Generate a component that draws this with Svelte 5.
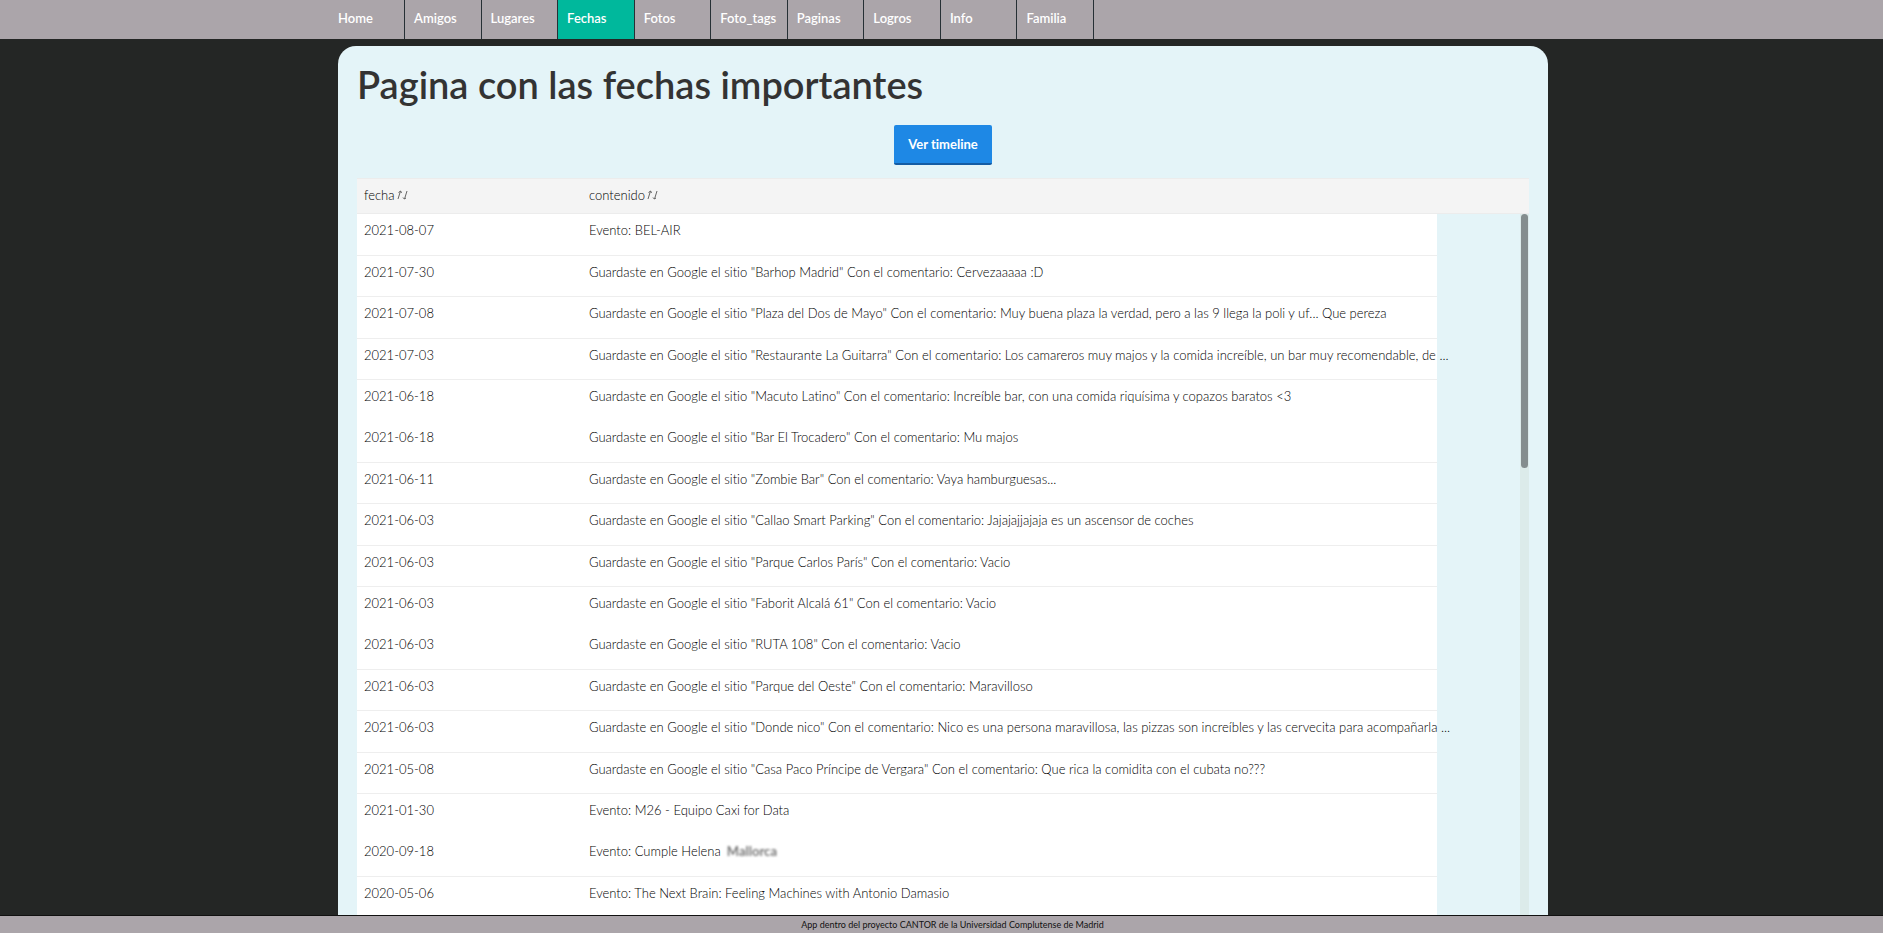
<script>
  const links = ['Home', 'Amigos', 'Lugares', 'Fechas', 'Fotos', 'Foto_tags', 'Paginas', 'Logros', 'Info', 'Familia'];
  const current = 'Fechas';
  const g = 'Guardaste en Google el sitio ';
  const c = ' Con el comentario: ';
  const rows = [
    ['2021-08-07', 'Evento: BEL-AIR'],
    ['2021-07-30', g + '"Barhop Madrid"' + c + 'Cervezaaaaa :D'],
    ['2021-07-08', g + '"Plaza del Dos de Mayo"' + c + 'Muy buena plaza la verdad, pero a las 9 llega la poli y uf... Que pereza'],
    ['2021-07-03', g + '"Restaurante La Guitarra"' + c + 'Los camareros muy majos y la comida increíble, un bar muy recomendable, de ...'],
    ['2021-06-18', g + '"Macuto Latino"' + c + 'Increíble bar, con una comida riquísima y copazos baratos <3'],
    ['2021-06-18', g + '"Bar El Trocadero"' + c + 'Mu majos'],
    ['2021-06-11', g + '"Zombie Bar"' + c + 'Vaya hamburguesas...'],
    ['2021-06-03', g + '"Callao Smart Parking"' + c + 'Jajajajjajaja es un ascensor de coches'],
    ['2021-06-03', g + '"Parque Carlos París"' + c + 'Vacio'],
    ['2021-06-03', g + '"Faborit Alcalá 61"' + c + 'Vacio'],
    ['2021-06-03', g + '"RUTA 108"' + c + 'Vacio'],
    ['2021-06-03', g + '"Parque del Oeste"' + c + 'Maravilloso'],
    ['2021-06-03', g + '"Donde nico"' + c + 'Nico es una persona maravillosa, las pizzas son increíbles y las cervecita para acompañarla ...'],
    ['2021-05-08', g + '"Casa Paco Príncipe de Vergara"' + c + 'Que rica la comidita con el cubata no???'],
    ['2021-01-30', 'Evento: M26 - Equipo Caxi for Data'],
    ['2020-09-18', 'Evento: Cumple Helena', 'Mallorca'],
    ['2020-05-06', 'Evento: The Next Brain: Feeling Machines with Antonio Damasio']
  ];
</script>

{#snippet sortIcon()}
  <svg class="sort" width="11" height="10" viewBox="0 0 11 10" aria-hidden="true">
    <path d="M1 9 3.5 1M1.5 2.5 3.7 1 4.5 3M10 1 7.5 9M6 7.5 7.3 9 9 8" />
  </svg>
{/snippet}

<div class="page">
  <nav>
    <div class="wrap">
      <ul>
        {#each links as link}
          <li><a href="#{link}" class:active={link === current}>{link}</a></li>
        {/each}
      </ul>
    </div>
  </nav>

  <main>
    <div class="wrap">
      <section class="panel">
        <h1>Pagina con las fechas importantes</h1>
        <div class="actions"><button class="primary">Ver timeline</button></div>
        <div class="grid">
          <table>
            <colgroup><col class="date" /><col /><col class="rest" /></colgroup>
            <thead>
              <tr>
                <th><button class="head">fecha{@render sortIcon()}</button></th>
                <th><button class="head">contenido{@render sortIcon()}</button></th>
                <th></th>
              </tr>
            </thead>
            <tbody>
              {#each rows as [date, text, hidden]}
                <tr>
                  <td>{date}</td>
                  <td>{text}{#if hidden}<span class="blurred">{hidden}</span>{/if}</td>
                  <td class="empty"></td>
                </tr>
              {/each}
            </tbody>
          </table>
          <div class="track"><div class="thumb"></div></div>
        </div>
      </section>
    </div>
  </main>

  <footer>App dentro del proyecto CANTOR de la Universidad Complutense de Madrid</footer>
</div>

<style>
  :global(body) {
    margin: 0;
    background: #242625;
    color: #333;
    font-family: Lato, "Open Sans", sans-serif;
    font-size: 13px;
    font-variant-ligatures: none;
  }
  .page {
    height: 100vh;
    display: flex;
    flex-direction: column;
  }
  .wrap {
    max-width: 1210px;
    margin: 0 auto;
    padding-left: 3px;
  }
  nav {
    background: #aba5aa;
    flex: none;
  }
  ul {
    list-style: none;
    margin: 0;
    padding: 0;
    display: grid;
    grid-template-columns: 67px repeat(9, 1fr);
    max-width: 756px;
  }
  li a {
    display: block;
    height: 39px;
    box-sizing: border-box;
    padding: 8px 0 0 9px;
    border-right: 1px solid #263035;
    color: #fff;
    font-weight: 600;
    line-height: 20px;
    text-decoration: none;
  }
  li:first-child a {
    padding-left: 0;
  }
  li a.active {
    background: #00b89c;
  }
  main {
    flex: 1;
    min-height: 0;
    overflow: hidden;
    padding-top: 7px;
  }
  .panel {
    background: #e4f4f8;
    border-radius: 18px 18px 0 0;
    padding: 14px 19px;
  }
  h1 {
    margin: 0;
    font-size: 38px;
    line-height: 48px;
    font-weight: 600;
  }
  .actions {
    display: flex;
    justify-content: center;
    padding: 17px 0 13px;
  }
  button {
    font: inherit;
    color: inherit;
    border: 0;
    cursor: pointer;
  }
  .primary {
    height: 40px;
    min-width: 98px;
    padding: 0 14px;
    border-radius: 2px;
    border-bottom: 2px solid #145ca4;
    background: #1e88e5;
    color: #fff;
    font-weight: 700;
  }
  .grid {
    position: relative;
  }
  table {
    width: 100%;
    table-layout: fixed;
    border-collapse: separate;
    border-spacing: 0;
  }
  .date {
    width: 225px;
  }
  .rest {
    width: 92px;
  }
  th {
    box-sizing: border-box;
    height: 36px;
    padding: 0 7px 2px;
    background: #f4f4f4;
    border-top: 1px solid #ececec;
    border-bottom: 1px solid #ececec;
    text-align: left;
    font-weight: 300;
    color: #000;
  }
  .head {
    padding: 0;
    background: none;
  }
  .sort {
    margin-left: 2px;
    fill: none;
    stroke: #666;
  }
  td {
    box-sizing: border-box;
    height: 41px;
    padding: 6px 0 6px 7px;
    background: #fff;
    border-bottom: 1px solid #eee;
    vertical-align: top;
    font-weight: 300;
    color: #000;
    line-height: 20px;
    white-space: nowrap;
  }
  tr:nth-child(5n + 1) td,
  tr:nth-child(5n + 3) td {
    height: 42px;
  }
  tr:nth-child(5n) td {
    border-bottom-color: #fff;
  }
  tr td.empty {
    background: none;
    border: 0;
  }
  .blurred {
    margin-left: 6px;
    filter: blur(1px);
    font-weight: 700;
    color: #777;
  }
  .track {
    position: absolute;
    top: 36px;
    right: 0;
    bottom: 0;
    width: 9px;
    background: #dcebea;
  }
  .thumb {
    width: 7px;
    height: 254px;
    margin: 0 auto;
    border-radius: 4px;
    background: #848d8e;
  }
  footer {
    flex: none;
    padding-left: 22px;
    border-top: 1px solid #111;
    background: #aba5aa;
    color: #111;
    font-size: 9px;
    line-height: 17px;
    text-align: center;
  }
</style>
